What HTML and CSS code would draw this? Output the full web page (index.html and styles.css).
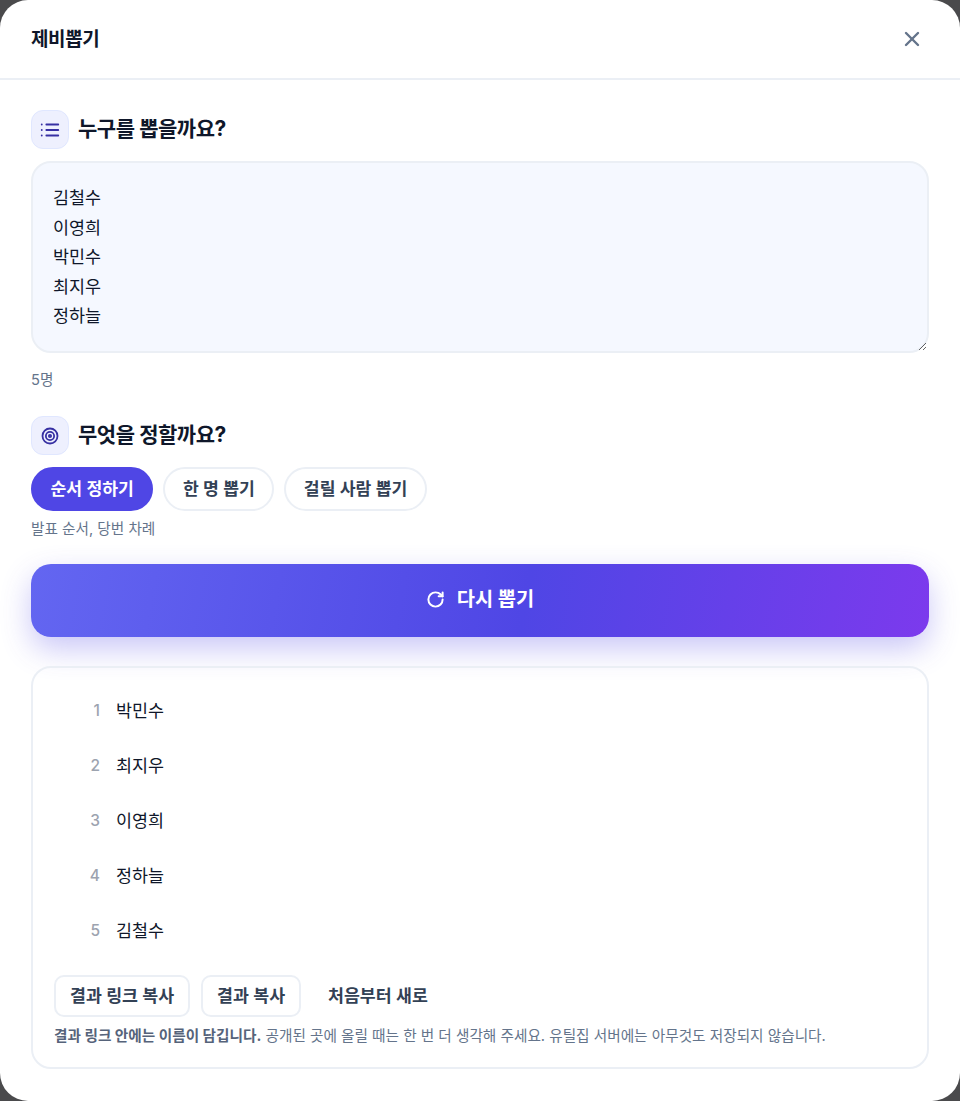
FILE: index.html
```html
<!DOCTYPE html>
<html lang="ko">
<head>
  <meta charset="utf-8">
  <title>제비뽑기</title>
  <link rel="stylesheet" href="styles.css">
</head>
<body>

<div class="modal">
  <header class="modal-head">
    <h2>제비뽑기</h2>
    <button type="button" class="close-btn" aria-label="닫기">
      <svg width="24" height="24" viewBox="0 0 24 24" fill="none" stroke="currentColor" stroke-width="2.4" stroke-linecap="round"><path d="M18 6 6 18"/><path d="m6 6 12 12"/></svg>
    </button>
  </header>

  <div class="modal-body">
    <div class="section-title">
      <span class="section-icon">
        <svg width="22" height="22" viewBox="0 0 24 24" fill="none" stroke="currentColor" stroke-width="2" stroke-linecap="round"><path d="M8 6h13"/><path d="M8 12h13"/><path d="M8 18h13"/><path d="M3 6h.01"/><path d="M3 12h.01"/><path d="M3 18h.01"/></svg>
      </span>
      <h3>누구를 뽑을까요?</h3>
    </div>
    <textarea class="names" spellcheck="false">김철수
이영희
박민수
최지우
정하늘</textarea>
    <p class="count">5명</p>

    <div class="section-title">
      <span class="section-icon">
        <svg width="18" height="18" viewBox="0 0 24 24" fill="none" stroke="currentColor" stroke-width="2.4"><circle cx="12" cy="12" r="10"/><circle cx="12" cy="12" r="5.5"/><circle cx="12" cy="12" r="1.5"/></svg>
      </span>
      <h3>무엇을 정할까요?</h3>
    </div>
    <div class="mode-row">
      <button type="button" class="mode active">순서 정하기</button>
      <button type="button" class="mode">한 명 뽑기</button>
      <button type="button" class="mode">걸릴 사람 뽑기</button>
    </div>
    <p class="hint">발표 순서, 당번 차례</p>

    <button type="button" class="draw-btn">
      <svg width="19" height="19" viewBox="0 0 24 24" fill="none" stroke="currentColor" stroke-width="2.5" stroke-linecap="round" stroke-linejoin="round"><path d="M21 12a9 9 0 1 1-9-9c2.52 0 4.93 1 6.74 2.74L21 8"/><path d="M21 3v5h-5"/></svg>
      다시 뽑기
    </button>

    <div class="result">
      <ol class="result-list">
        <li><span class="num">1</span>박민수</li>
        <li><span class="num">2</span>최지우</li>
        <li><span class="num">3</span>이영희</li>
        <li><span class="num">4</span>정하늘</li>
        <li><span class="num">5</span>김철수</li>
      </ol>
      <div class="result-actions">
        <button type="button" class="outline-btn">결과 링크 복사</button>
        <button type="button" class="outline-btn">결과 복사</button>
        <button type="button" class="plain-btn">처음부터 새로</button>
      </div>
      <p class="notice"><strong>결과 링크 안에는 이름이 담깁니다.</strong> 공개된 곳에 올릴 때는 한 번 더 생각해 주세요. 유틸집 서버에는 아무것도 저장되지 않습니다.</p>
    </div>
  </div>
</div>

</body>
</html>
```

FILE: styles.css
```css
* {
  box-sizing: border-box;
}

html, body {
  margin: 0;
  height: 100%;
}

body {
  background-color: #4a4a4c;
  font-family: Inter, "Noto Sans CJK KR", sans-serif;
  color: #0f172a;
  overflow: hidden;
}

button {
  font-family: inherit;
  line-height: 20px;
  cursor: pointer;
}

.modal {
  width: 960px;
  height: 1101px;
  background-color: #fff;
  border-radius: 28px;
  overflow: hidden;
}

.modal-head {
  height: 80px;
  padding: 0 31px;
  display: flex;
  align-items: center;
  justify-content: space-between;
  border-bottom: 2px solid #ebeff5;
}

.modal-head h2 {
  margin: 2px 0 0;
  font-size: 19px;
  line-height: 26px;
  font-weight: 700;
  letter-spacing: -0.4px;
}

.close-btn {
  width: 34px;
  height: 34px;
  border: none;
  background: none;
  padding: 0;
  display: flex;
  align-items: center;
  justify-content: center;
  color: #64748b;
}

.modal-body {
  padding: 30px 31px 0;
}

.section-title {
  display: flex;
  align-items: center;
  gap: 9px;
  margin-bottom: 12px;
}

.section-title h3 {
  margin: 0 0 2px;
  font-size: 21px;
  line-height: 28px;
  font-weight: 700;
  letter-spacing: -0.45px;
}

.section-icon {
  width: 38px;
  height: 39px;
  display: flex;
  align-items: center;
  justify-content: center;
  background-color: #eef0fe;
  border: 1px solid #e0e7ff;
  border-radius: 12px;
  color: #3730a3;
}

.names {
  display: block;
  width: 898px;
  height: 192px;
  padding: 20px 20px;
  background-color: #f5f8ff;
  border: 2px solid #ebeff5;
  border-radius: 20px;
  font-family: inherit;
  font-size: 17.4px;
  line-height: 29.5px;
  color: #0f172a;
  outline: none;
}

.count {
  margin: 17px 0 26px;
  font-size: 14.65px;
  line-height: 20px;
  color: #64748b;
}

.mode-row {
  display: flex;
  gap: 10px;
}

.mode {
  height: 44px;
  padding: 0 17.5px;
  background-color: #fff;
  border: 2px solid #ebeff5;
  border-radius: 22px;
  font-size: 17.2px;
  font-weight: 600;
  color: #334155;
}

.mode.active {
  background-color: #4f46e5;
  border-color: #4f46e5;
  color: #fff;
}

.hint {
  margin: 8px 0 0;
  font-size: 14.65px;
  line-height: 20px;
  color: #64748b;
}

.draw-btn {
  width: 898px;
  height: 73px;
  margin-top: 25px;
  padding-bottom: 4px;
  display: flex;
  align-items: center;
  justify-content: center;
  gap: 12px;
  border: none;
  border-radius: 20px;
  background: linear-gradient(100deg, #6366f1 0%, #4f46e5 55%, #7c3aed 100%);
  box-shadow: 0 12px 30px rgba(79, 70, 229, 0.3);
  color: #fff;
  font-size: 19.8px;
  font-weight: 700;
}

.result {
  margin-top: 29px;
  height: 403px;
  padding: 15px 21px 0;
  border: 2px solid #ebeff5;
  border-radius: 20px;
}

.result-list {
  list-style: none;
  margin: 0;
  padding: 0;
}

.result-list li {
  height: 55px;
  display: flex;
  align-items: center;
  font-size: 17.4px;
  line-height: 24px;
  color: #0f172a;
}

.num {
  width: 46px;
  text-align: right;
  margin-right: 16px;
  font-size: 15.5px;
  font-weight: 500;
  color: #9ca3af;
}

.result-actions {
  display: flex;
  align-items: center;
  gap: 11px;
  margin-top: 17px;
}

.outline-btn {
  height: 42px;
  padding: 0 14px;
  background-color: #fff;
  border: 2px solid #ebeff5;
  border-radius: 10px;
  font-size: 17.3px;
  font-weight: 600;
  color: #334155;
}

.plain-btn {
  height: 42px;
  padding: 0 16px;
  background: none;
  border: none;
  font-size: 17.3px;
  font-weight: 600;
  color: #334155;
}

.notice {
  margin: 9px 0 0;
  font-size: 14.65px;
  line-height: 20px;
  color: #64748b;
}

.notice strong {
  font-weight: 700;
  color: #56637a;
}
```
